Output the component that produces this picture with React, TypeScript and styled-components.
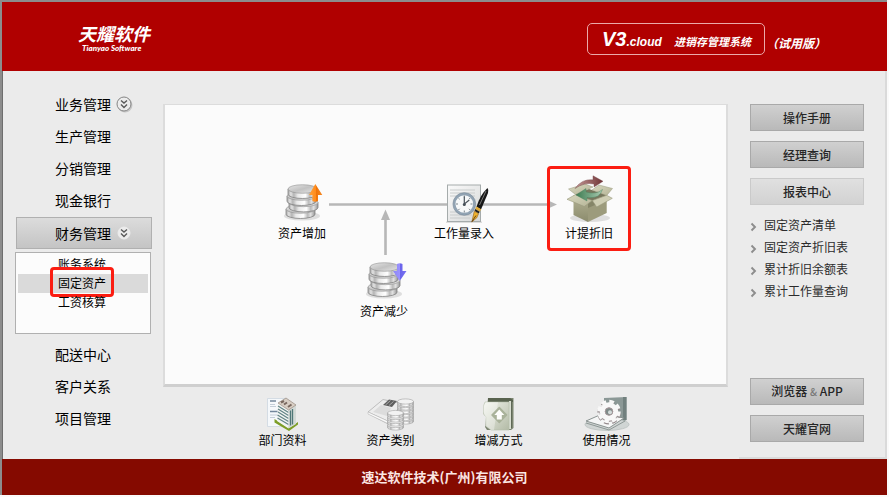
import React from 'react';
import styled, { createGlobalStyle, css } from 'styled-components';

const GlobalStyle = createGlobalStyle`
  *, *::before, *::after { box-sizing: border-box; }
  body {
    margin: 0;
    background: #fafafa;
    color: #000;
    font-family: "Noto Sans CJK SC", "Noto Sans", sans-serif;
    font-size: 12px;
  }
  button { font-family: inherit; color: inherit; padding: 0; cursor: pointer; }
  svg { display: block; flex: none; overflow: visible; }
`;

const Window = styled.div`
  min-height: calc(100vh - 2px);
  margin-right: 2px;
  display: flex;
  flex-direction: column;
  border-top: 2px solid #8c8c8c;
  border-left: 2px solid #8c8c8c;
`;

const Header = styled.header`
  height: 69px;
  flex: none;
  padding: 0 61px 0 76px;
  display: flex;
  justify-content: space-between;
  align-items: flex-start;
  background: #b00000;
  color: #fff;
  font-style: italic;
  font-weight: 700;
`;

const Brand = styled.div`
  padding-top: 21px;
`;

const Logo = styled.h1`
  margin: 0;
  font-size: 18px;
  line-height: 20px;
`;

const LogoLatin = styled.div`
  padding: 0 0 0 4px;
  font-family: Lato, sans-serif;
  font-size: 8px;
  font-weight: 900;
  line-height: 10px;
`;

const Edition = styled.div`
  display: flex;
  align-items: center;
  margin-top: 21px;
  gap: 1px;
`;

const EditionBox = styled.div`
  width: 178px;
  height: 32px;
  padding: 0 13px 0 14px;
  display: flex;
  align-items: baseline;
  justify-content: space-between;
  border: 1px solid #eba9a9;
  border-radius: 5px;
  font-size: 11px;
  line-height: 30px;
  white-space: nowrap;
`;

const Version = styled.span`
  font-family: "Liberation Sans", sans-serif;
  font-size: 20px;
`;

const VersionTail = styled.span`
  font-size: 12px;
`;

const Trial = styled.span`
  margin-top: 8px;
  font-size: 12px;
  line-height: 16px;
`;

const Body = styled.div`
  flex: 1;
  display: grid;
  grid-template-columns: 160px minmax(0, 1fr) 159px;
  border-left: 1px solid #6e6e6e;
  background: #ebebeb;
`;

const Sidebar = styled.nav`
  padding: 18px 11px 0 13px;
`;

const NavItem = styled.button<{ $active?: boolean }>`
  width: 100%;
  height: 32px;
  padding: 0 0 2px 38px;
  display: flex;
  align-items: center;
  gap: 5px;
  border: 1px solid transparent;
  background: none;
  font-size: 14px;
  line-height: 20px;
  ${p => p.$active && css`
    padding-bottom: 0;
    border-color: #b0b0b0;
    background: linear-gradient(#dcdcdc, #c4c4c4);
  `}
`;

const Submenu = styled.div`
  height: 82px;
  margin: 3px 1px 5px -1px;
  padding: 2px;
  border: 1px solid #b0b0b0;
  background: #fcfcfc;
`;

const SubItem = styled.button<{ $active?: boolean }>`
  position: relative;
  display: block;
  width: 100%;
  height: 19px;
  padding: 0 2px 2px 0;
  border: 0;
  background: ${p => (p.$active ? '#dadada' : 'none')};
  font-size: 12px;
  line-height: 17px;
`;

const highlight = css`
  content: "";
  position: absolute;
  border: 3px solid #fb1d12;
  border-radius: 4px;
`;

const SubLabel = styled.span<{ $marked?: boolean }>`
  position: relative;
  ${p => p.$marked && css`
    &::after { ${highlight} inset: -7px -8px -6px; }
  `}
`;

const Main = styled.main`
  display: flex;
  flex-direction: column;
  padding-top: 33px;
`;

const Canvas = styled.section`
  position: relative;
  flex: 1;
  border: 2px solid #dcdcdc;
  border-top-width: 1px;
  border-bottom: 3px solid #cfcfcf;
  background: #fbfbfb;
`;

const Connectors = styled.svg`
  position: absolute;
  left: 0;
  top: 0;
`;

const Node = styled.button<{ $x: number; $y: number; $marked?: boolean }>`
  position: absolute;
  left: ${p => p.$x}px;
  top: ${p => p.$y}px;
  width: 84px;
  height: 85px;
  padding-top: 9px;
  display: flex;
  flex-direction: column;
  align-items: center;
  border: 0;
  background: none;
  font-size: 12px;
  line-height: 20px;
  ${p => p.$marked && css`
    &::after { ${highlight} inset: 0; }
  `}
`;

const NodeIcon = styled.span`
  height: 48px;
  display: flex;
  align-items: flex-end;
`;

const Shortcuts = styled.section`
  height: 72px;
  padding: 10px 2px 0 0;
  display: grid;
  grid-template-columns: repeat(4, 108px);
  justify-content: center;
`;

const Shortcut = styled.button`
  display: flex;
  flex-direction: column;
  align-items: center;
  border: 0;
  background: none;
  font-size: 12px;
  line-height: 18px;
`;

const Aside = styled.aside`
  margin-left: 11px;
  padding: 33px 21px 15px 11px;
  display: flex;
  flex-direction: column;
  gap: 10px;
  border-right: 2px solid #dadada;
  border-bottom: 2px solid #dadada;
`;

const AsideButton = styled.button<{ $light?: boolean }>`
  height: 27px;
  border: 1px solid ${p => (p.$light ? '#cacaca' : '#a9a9a9')};
  background: ${p => (p.$light ? 'linear-gradient(#e0e0e0, #d2d2d2)' : 'linear-gradient(#d0d0d0, #b9b9b9)')};
  color: #262626;
  font-size: 12px;
  font-weight: 500;
  line-height: 18px;
`;

const Amp = styled.span`
  color: #777;
  font-size: 10px;
`;

const Reports = styled.ul`
  flex: 1;
  margin: -1px 0 1px;
  padding: 0;
  list-style: none;
`;

const ReportLink = styled.a`
  display: flex;
  align-items: center;
  gap: 8px;
  color: #2b2b2b;
  font-size: 12px;
  line-height: 22px;
  text-decoration: none;
  white-space: nowrap;
`;

const Footer = styled.footer`
  height: 36px;
  flex: none;
  background: #850a00;
  color: #fbe6e3;
  font-size: 13px;
  font-weight: 700;
  line-height: 36px;
  text-align: center;
`;

const ExpandBadge = ({ outlined }: { outlined?: boolean }) => (
  <svg width="16" height="16" viewBox="0 0 16 16">
    {outlined && <circle cx="9" cy="9" r="7.500" fill="#c6c6c6" />}
    <circle cx="8" cy="8" r={outlined ? 7 : 6} fill="#ececec" stroke={outlined ? '#858585' : '#ececec'} />
    <path d="M5 4.500 8 7l3-2.500M5 8.500 8 11.500l3-3" fill="none" stroke="#5a5a5a" strokeWidth="1.400" />
  </svg>
);

const Chevron = () => (
  <svg width="6" height="9" viewBox="0 0 6 9">
    <path d="M1.500 2.500 5 6l-3.500 3.500" fill="none" stroke="#8d8d8d" strokeWidth="1.900" />
  </svg>
);

const Defs = () => (
  <defs>
    <linearGradient id="metal">
      <stop offset="0" stopColor="#a8a8a8" />
      <stop offset=".1" stopColor="#e2e2e2" />
      <stop offset=".2" stopColor="#b4b4b4" />
      <stop offset=".34" stopColor="#e9e9e9" />
      <stop offset=".6" stopColor="#fff" />
      <stop offset=".75" stopColor="#bababa" />
      <stop offset=".85" stopColor="#e2e2e2" />
      <stop offset="1" stopColor="#959595" />
    </linearGradient>
    <linearGradient id="coinTop" x2="1" y2="1">
      <stop offset="0" stopColor="#e6e6e6" />
      <stop offset=".5" stopColor="#c2c2c2" />
      <stop offset="1" stopColor="#e8e8e8" />
    </linearGradient>
    <linearGradient id="orange">
      <stop offset="0" stopColor="#ffa23c" />
      <stop offset=".5" stopColor="#ff8c1c" />
      <stop offset=".51" stopColor="#ee7208" />
      <stop offset="1" stopColor="#f58a25" />
    </linearGradient>
    <linearGradient id="violet">
      <stop offset="0" stopColor="#8d86f5" />
      <stop offset=".5" stopColor="#9a92ff" />
      <stop offset=".51" stopColor="#6962ea" />
      <stop offset="1" stopColor="#7972f2" />
    </linearGradient>
    <linearGradient id="carton" x2="0" y2="1">
      <stop offset="0" stopColor="#b4b394" />
      <stop offset="1" stopColor="#8b8b6d" />
    </linearGradient>
    <linearGradient id="flap" x2="1" y2="1">
      <stop offset="0" stopColor="#d8d8bf" />
      <stop offset="1" stopColor="#b5b496" />
    </linearGradient>
    <linearGradient id="redArrow">
      <stop offset="0" stopColor="#c59a97" />
      <stop offset="1" stopColor="#703336" />
    </linearGradient>
    <linearGradient id="greenArrow">
      <stop offset="0" stopColor="#3e7c52" />
      <stop offset="1" stopColor="#a9cbb1" />
    </linearGradient>
    <linearGradient id="paper" x2="1" y2="1">
      <stop offset="0" stopColor="#fafafa" />
      <stop offset="1" stopColor="#d6d8d8" />
    </linearGradient>
    <linearGradient id="book" x2="1" y2="1">
      <stop offset="0" stopColor="#f1f3ec" />
      <stop offset="1" stopColor="#b3bba6" />
    </linearGradient>
  </defs>
);

const coins = [
  { x: 2, y: 26 },
  { x: 5, y: 19.4 },
  { x: 3, y: 13 },
  { x: 4, y: 6 },
];

const CoinStack = ({ down }: { down?: boolean }) => (
  <svg width="42" height="40" viewBox="-3 0 42 40">
    <ellipse cx="18" cy="33" rx="18" ry="4.500" fill="#dedede" />
    {coins.map(({ x, y }) => (
      <g key={y} stroke="#838383" strokeWidth=".8">
        <path d={`M${x} ${y}v5.200a14.500 4.300 0 0 0 29 0v-5.200z`} fill="url(#metal)" />
        <ellipse cx={x + 14.5} cy={y} rx="14.500" ry="4.300" fill="url(#coinTop)" strokeWidth=".5" />
      </g>
    ))}
    {down ? (
      <path d="M31 3q2.700-1.500 5.500 0v7H40.500L33.700 20 27 10h4z" fill="url(#violet)" />
    ) : (
      <path d="M31.300 1 38.300 12H34v6q-2.800 1.300-5.600 0v-6H25z" fill="url(#orange)" />
    )}
  </svg>
);

const ClockIcon = () => (
  <svg width="44" height="40" viewBox="-4 -1 44 40">
    <path d="M0 37.500h36v1.500H0z" fill="#dcdcdc" />
    <rect x="1.500" y="1" width="33" height="36.500" fill="url(#paper)" stroke="#a5abab" />
    <path d="M4 6h25M4 9h25M4 12h25M4 28h20M4 31h22M4 34h20" stroke="#c9cccc" />
    <circle cx="18.300" cy="20" r="10" fill="#f6f8f9" stroke="#91a3b3" strokeWidth="2.400" />
    <circle cx="18.300" cy="20" r="11.400" fill="none" stroke="#66788a" strokeWidth=".5" />
    <path d="M18.300 11.500v2M18.300 26.500v2M10 20h2M24.500 20h2M12.400 14l1.200 1.200M24.200 14 23 15.200M12.400 26l1.200-1.200M24.200 26 23 24.800" stroke="#7b848b" />
    <path d="M18.300 12.500V20l5-4" fill="none" stroke="#4b545c" strokeWidth="1.200" />
    <circle cx="18.300" cy="20.500" r="1.500" fill="#465059" />
    <path d="M41.500 4q1.500 2 .5 5L35 25.500l-4.500-2.700Q34 11 41.500 4z" fill="#171717" />
    <path d="M40 7 33.500 21" stroke="#777" strokeWidth="1" />
    <path d="m30.500 22.500 4.600 2.800-1.300 2.500-4.600-2.800z" fill="#e0ab35" />
    <path d="m29.200 25 4.500 2.800-1 1.800-4.200-2.500z" fill="#222" />
    <path d="m28.300 27.200 4.200 2.500-1.700 4-5 4.300z" fill="#efb22e" stroke="#8e5b18" strokeWidth=".6" />
    <path d="m26 37.500 4-6" stroke="#3c2810" strokeWidth=".8" />
  </svg>
);

const BoxIcon = () => (
  <svg width="46" height="48" viewBox="-2 0 46 48">
    <ellipse cx="22" cy="43" rx="20" ry="4" fill="#dedede" />
    <path d="M7 19.500 21 14l18 6-15 8z" fill="#77775d" />
    <path d="M5.500 20 20 27v20L5.500 40z" fill="url(#carton)" />
    <path d="m20 27 18.700-7v18L20 47z" fill="#9c9b7c" />
    <path d="m20 27 18.700-7v5L20 33z" fill="#77775c" opacity=".6" />
    <path d="M.5 14 17 9l8 3L7.500 19.500z" fill="url(#flap)" stroke="#99987c" strokeWidth=".5" />
    <path d="m31 10 13.500 3.500-5.800 7L24 15z" fill="url(#flap)" stroke="#99987c" strokeWidth=".5" />
    <path d="M7 13.500Q14 3.500 25 4.800V.8l10 5.500L26 12V9Q16 7 7 13.500z" fill="url(#redArrow)" stroke="#754446" strokeWidth=".4" />
    <path d="m7.300 19.700 17 5.800-8 6L-1 24.300z" fill="url(#flap)" stroke="#99987c" strokeWidth=".6" />
    <path d="m24.300 25.500 14.400-5.200 5.600 3L28.700 32z" fill="#cfceb4" stroke="#99987c" strokeWidth=".6" />
    <path d="M34.500 14.500Q32 24 19 22.500V26L8 20l10-6.500V17q10 3 16.500-2.500z" fill="url(#greenArrow)" stroke="#4a805a" strokeWidth=".4" />
  </svg>
);

const BuildingIcon = () => (
  <svg width="32" height="34" viewBox="0 0 32 34">
    <path d="M.5 1.500h18v28H.5z" fill="#f5f8fb" stroke="#cdd6df" strokeWidth=".8" />
    <path d="M3 4h6M3 14.500h8" stroke="#73879c" strokeWidth="1.400" />
    <path d="M3 7.500h5M3 9.500h6M3 18h7M3 20.500h5" stroke="#c4ced8" />
    <path d="m7.500 22 14.500 9 9-6v2.500L22 34 7.500 25.500z" fill="#7d9e27" />
    <path d="m11 6 10.500 7v18.500L10 24z" fill="#f3f5f3" />
    <path d="m11 9 10.500 6.500M11 12l10.500 6.500M11 15l10.500 6.500M10.500 18l11 6.500M10.500 21l11 6.500" stroke="#648688" strokeWidth="1.300" />
    <path d="m21.500 13 7.500-5v19l-7.500 4.500z" fill="#d3dad7" />
    <path d="m23.500 13.500 0 15M25.500 12v15.500" stroke="#4f7778" strokeWidth="1.300" />
    <path d="M11 6 19 1l10 7-7.500 5z" fill="#d8cec4" stroke="#887a70" strokeWidth=".6" />
    <path d="m14 5.500 3-1.500M17 7.500l3-2M21 10l3.500-2.500" stroke="#79685f" strokeWidth="2" />
  </svg>
);

const smallCoins = (x: number, ys: number[]) =>
  ys.map(y => (
    <g key={`${x}-${y}`} stroke="#a2a2a2" strokeWidth=".6">
      <path d={`M${x} ${y}v2.500a8 2.600 0 0 0 16 0v-2.500z`} fill="url(#metal)" />
      <ellipse cx={x + 8} cy={y} rx="8" ry="2.600" fill="#f2f2f2" />
    </g>
  ));

const LedgerIcon = () => (
  <svg width="46" height="34" viewBox="0 0 46 34">
    <path d="m0 17 15-14 18 3-12 22z" fill="#c2c2c2" />
    <path d="M0 15 15 2.500l17 3.500-8 20z" fill="#ededed" stroke="#a9a9a9" strokeWidth=".7" />
    <path d="m0 15 24 11-1 2L0 17z" fill="#fafafa" stroke="#b5b5b5" strokeWidth=".5" />
    <path d="m5 15 8-7 10 3-4 8z" fill="#dcdcdc" />
    <path d="m15 8 6-5.500 8 1.500-5 6z" fill="#5f5f5f" />
    <path d="m17.500 8 5-4.500M21 8.500l4.500-4" stroke="#a8a8a8" />
    {smallCoins(29.5, [22, 18.5, 15, 11.5, 8, 4.5])}
    {smallCoins(19.5, [28, 24, 20, 16])}
  </svg>
);

const BookIcon = () => (
  <svg width="34" height="34" viewBox="0 0 34 34">
    <path d="M6 1h25.500v30L29 33H5l-2-3z" fill="#7c8571" />
    <path d="M6 1h22l3 2v2H6z" fill="#59634f" />
    <path d="M27 4h2v28h-2z" fill="#d8ddd0" />
    <path d="M29.500 4v27" stroke="#5f6957" />
    <path d="M3 5h24v28H9l-5-4V20L1.500 17V9z" fill="url(#book)" stroke="#b4bca9" strokeWidth=".6" />
    <path d="M4 5h12l-4 28H9l-6-4V18L1.500 15V9z" fill="#fff" opacity=".35" />
    <path d="m17.300 10.500 7.300 7.500-7.300 7.500L10 18z" fill="#a9b29a" stroke="#a9b29a" strokeWidth="1.500" strokeLinejoin="round" />
    <path d="m17.300 12.500 5 5.500h-2.500v4.500h-5V18h-2.500z" fill="#fdfdfb" />
  </svg>
);

const GearIcon = () => (
  <svg width="46" height="34" viewBox="0 0 46 34">
    <path d="M20 1 42.500 0v23l-10 3L20 20z" fill="#8b9896" />
    <path d="m39 0 3.500 0v23L39 24z" fill="#71807e" />
    <ellipse cx="23" cy="27.500" rx="22" ry="6" fill="#d0d5d4" stroke="#b4bbba" strokeWidth=".7" />
    <path d="m2 24 16-7 22 4-15 10z" fill="#f5f6f6" stroke="#7f8987" strokeWidth=".9" />
    <path d="m2 26 23 7 16-9" fill="none" stroke="#8e9896" />
    <circle cx="25" cy="15.700" r="9" fill="none" stroke="#93898b" strokeWidth="5.500" strokeDasharray="4.200 2.870" />
    <circle cx="25" cy="15.500" r="6.500" fill="none" stroke="#a3999b" strokeWidth="6" />
    <circle cx="25" cy="14.500" r="9" fill="none" stroke="#f8f8f8" strokeWidth="5.500" strokeDasharray="4.200 2.870" />
    <circle cx="25" cy="14.500" r="6.500" fill="none" stroke="#f8f8f8" strokeWidth="5.500" />
    <circle cx="25" cy="14.500" r="3.800" fill="#7e8b89" stroke="#a9999c" />
    <circle cx="26" cy="15.300" r="2" fill="#d4dbda" />
  </svg>
);

const nodes = [
  { label: '资产增加', x: 95, y: 61, icon: <CoinStack /> },
  { label: '工作量录入', x: 257, y: 61, icon: <ClockIcon /> },
  { label: '计提折旧', x: 382, y: 61, icon: <BoxIcon />, marked: true },
  { label: '资产减少', x: 177, y: 139, icon: <CoinStack down /> },
];

const shortcuts = [
  { label: '部门资料', icon: <BuildingIcon /> },
  { label: '资产类别', icon: <LedgerIcon /> },
  { label: '增减方式', icon: <BookIcon /> },
  { label: '使用情况', icon: <GearIcon /> },
];

export default function App() {
  return (
    <>
      <GlobalStyle />
      <Window>
        <Header>
          <Brand>
            <Logo>天耀软件</Logo>
            <LogoLatin>Tianyao Software</LogoLatin>
          </Brand>
          <Edition>
            <EditionBox>
              <Version>V3<VersionTail>.cloud</VersionTail></Version>
              <span>进销存管理系统</span>
            </EditionBox>
            <Trial>（试用版）</Trial>
          </Edition>
        </Header>
        <Body>
          <Sidebar>
            <NavItem>业务管理<ExpandBadge outlined /></NavItem>
            <NavItem>生产管理</NavItem>
            <NavItem>分销管理</NavItem>
            <NavItem>现金银行</NavItem>
            <NavItem $active aria-expanded="true">财务管理<ExpandBadge /></NavItem>
            <Submenu>
              <SubItem>账务系统</SubItem>
              <SubItem $active><SubLabel $marked>固定资产</SubLabel></SubItem>
              <SubItem>工资核算</SubItem>
            </Submenu>
            <NavItem>配送中心</NavItem>
            <NavItem>客户关系</NavItem>
            <NavItem>项目管理</NavItem>
          </Sidebar>
          <Main>
            <Canvas>
              <Connectors width="460" height="160" viewBox="0 0 460 160">
                <Defs />
                <path d="M164 99.500h220" stroke="#b7b7b7" strokeWidth="2.600" />
                <path d="m382 95 10 4.500-10 4.500z" fill="#b7b7b7" />
                <path d="M220.500 150v-36" stroke="#b7b7b7" strokeWidth="2.600" />
                <path d="m216 115 4.500-10.500 4.500 10.500z" fill="#b7b7b7" />
              </Connectors>
              {nodes.map(n => (
                <Node key={n.label} $x={n.x} $y={n.y} $marked={n.marked}>
                  <NodeIcon>{n.icon}</NodeIcon>
                  {n.label}
                </Node>
              ))}
            </Canvas>
            <Shortcuts>
              {shortcuts.map(s => (
                <Shortcut key={s.label}>{s.icon}{s.label}</Shortcut>
              ))}
            </Shortcuts>
          </Main>
          <Aside>
            <AsideButton>操作手册</AsideButton>
            <AsideButton>经理查询</AsideButton>
            <AsideButton $light>报表中心</AsideButton>
            <Reports>
              {['固定资产清单', '固定资产折旧表', '累计折旧余额表', '累计工作量查询'].map(r => (
                <li key={r}><ReportLink href="#"><Chevron />{r}</ReportLink></li>
              ))}
            </Reports>
            <AsideButton>浏览器 <Amp>&amp;</Amp> APP</AsideButton>
            <AsideButton>天耀官网</AsideButton>
          </Aside>
        </Body>
        <Footer>速达软件技术(广州)有限公司</Footer>
      </Window>
    </>
  );
}
